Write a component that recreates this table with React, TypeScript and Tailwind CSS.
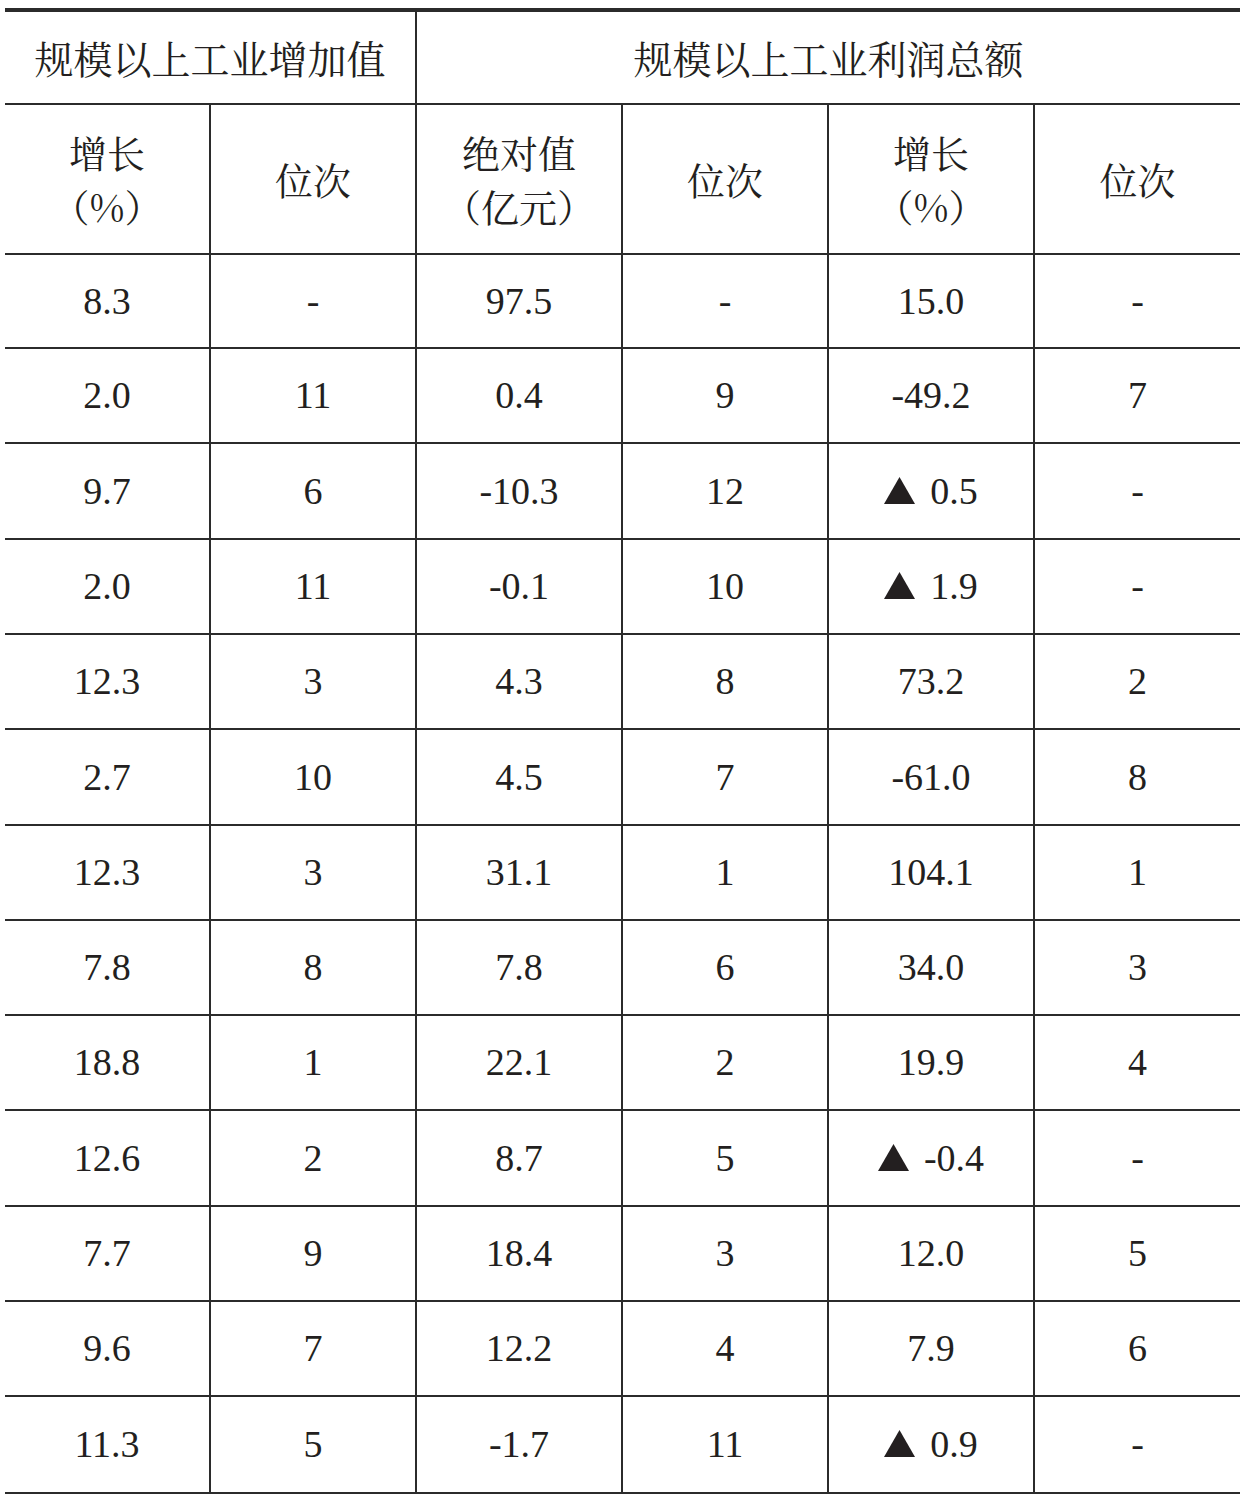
import React from 'react'

const cjk = "font-['Noto_Serif_CJK_SC','Noto_Sans_CJK_SC',serif]"

const rows: string[][] = [
  ['8.3', '-', '97.5', '-', '15.0', '-'],
  ['2.0', '11', '0.4', '9', '-49.2', '7'],
  ['9.7', '6', '-10.3', '12', '▲0.5', '-'],
  ['2.0', '11', '-0.1', '10', '▲1.9', '-'],
  ['12.3', '3', '4.3', '8', '73.2', '2'],
  ['2.7', '10', '4.5', '7', '-61.0', '8'],
  ['12.3', '3', '31.1', '1', '104.1', '1'],
  ['7.8', '8', '7.8', '6', '34.0', '3'],
  ['18.8', '1', '22.1', '2', '19.9', '4'],
  ['12.6', '2', '8.7', '5', '▲-0.4', '-'],
  ['7.7', '9', '18.4', '3', '12.0', '5'],
  ['9.6', '7', '12.2', '4', '7.9', '6'],
  ['11.3', '5', '-1.7', '11', '▲0.9', '-'],
]

// row pitch is ~95.25px, so heights alternate to keep lines on the grid
const heights = [
  'h-[94px]', 'h-[95px]', 'h-[96px]', 'h-[95px]', 'h-[95px]', 'h-[96px]', 'h-[95px]',
  'h-[95px]', 'h-[95px]', 'h-[96px]', 'h-[95px]', 'h-[95px]', 'h-[95px]',
]

function Triangle() {
  return (
    <svg width="31" height="27" viewBox="0 0 31 27" className="mr-[15px] mt-[-2px]">
      <polygon points="15.5,0 31,27 0,27" fill="#231f20" />
    </svg>
  )
}

function Value({ v }: { v: string }) {
  if (v.startsWith('▲')) {
    return (
      <span className="flex items-center">
        <Triangle />
        {v.slice(1)}
      </span>
    )
  }
  return <span>{v}</span>
}

function HeadCell({ lines, last }: { lines: string[]; last?: boolean }) {
  return (
    <div
      className={`${last ? 'flex-1' : 'w-[206px] border-r-2'} border-[#2b2b2b] flex flex-col items-center justify-center ${cjk} text-[38px] leading-[54px] text-[#231f20]`}
    >
      {lines.map((l) => (
        <span key={l}>{l}</span>
      ))}
    </div>
  )
}

export default function App() {
  return (
    <main className="min-h-screen bg-white">
      <div className="ml-[5px] pt-[8px]">
        <div className="border-t-4 border-b-4 border-[#2b2b2b]">
          <div className="flex h-[93px] border-b-2 border-[#2b2b2b]">
            <div
              className={`w-[412px] border-r-2 border-[#2b2b2b] flex items-center justify-center ${cjk} text-[39px] text-[#231f20]`}
            >
              规模以上工业增加值
            </div>
            <div className={`flex-1 flex items-center justify-center ${cjk} text-[39px] text-[#231f20]`}>
              规模以上工业利润总额
            </div>
          </div>
          <div className="flex h-[150px] border-b-2 border-[#2b2b2b]">
            <HeadCell lines={['增长', '（%）']} />
            <HeadCell lines={['位次']} />
            <HeadCell lines={['绝对值', '（亿元）']} />
            <HeadCell lines={['位次']} />
            <HeadCell lines={['增长', '（%）']} />
            <HeadCell lines={['位次']} last />
          </div>
          {rows.map((r, i) => (
            <div
              key={i}
              className={`flex ${heights[i]} ${i < rows.length - 1 ? 'border-b-2' : ''} border-[#2b2b2b]`}
            >
              {r.map((v, j) => (
                <div
                  key={j}
                  className={`${j < 5 ? 'w-[206px] border-r-2' : 'flex-1'} border-[#2b2b2b] flex items-center justify-center font-['Liberation_Serif',serif] text-[38px] text-[#231f20]`}
                >
                  <Value v={v} />
                </div>
              ))}
            </div>
          ))}
        </div>
      </div>
    </main>
  )
}
